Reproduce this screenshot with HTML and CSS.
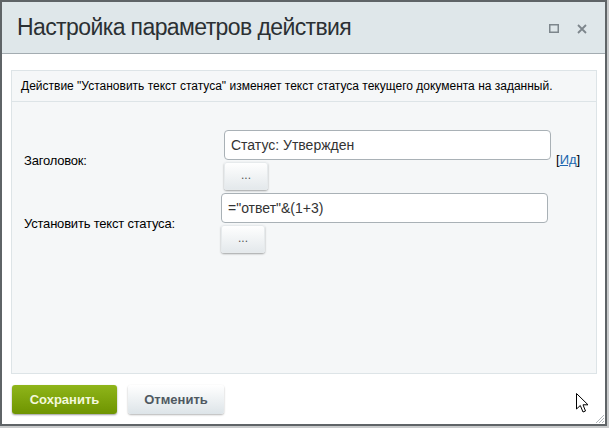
FILE: index.html
```html
<!DOCTYPE html>
<html lang="ru">
<head>
<meta charset="utf-8">
<link rel="stylesheet" href="styles.css">
</head>
<body>
<div class="window">
  <div class="header">
    <div class="title">Настройка параметров действия</div>
    <div class="hicons">
      <svg class="hicon" width="10" height="9" viewBox="0 0 10 9"><rect x="0.75" y="0.75" width="8.5" height="7.5" fill="none" stroke="#7d868c" stroke-width="1.5"/></svg>
      <svg class="hicon" width="10" height="10" viewBox="0 0 10 10"><path d="M1 1 L9 9 M9 1 L1 9" stroke="#7d868c" stroke-width="1.8"/></svg>
    </div>
  </div>
  <div class="content">
    <div class="panel">
      <div class="desc">Действие "Установить текст статуса" изменяет текст статуса текущего документа на заданный.</div>
      <div class="form">
        <div class="row">
          <div class="label">Заголовок:</div>
          <div class="ctrl ctrl1">
            <div class="input">Статус: Утвержден</div>
            <div class="dots">...</div>
          </div>
          <div class="idlink">[<a href="#">Ид</a>]</div>
        </div>
        <div class="row">
          <div class="label">Установить текст статуса:</div>
          <div class="ctrl ctrl2">
            <div class="input">="ответ"&amp;(1+3)</div>
            <div class="dots">...</div>
          </div>
        </div>
      </div>
    </div>
    <div class="footer">
      <div class="btn save">Сохранить</div>
      <div class="btn cancel">Отменить</div>
    </div>
  </div>
  <svg class="cursor" width="13" height="20" viewBox="0 0 13 20"><path d="M0.5 0.5 L0.5 16 L4.3 12.5 L7 19 L9.5 18 L7 11.8 L12 11.8 Z" fill="#fff" stroke="#000" stroke-width="1"/></svg>
  <svg class="grip" width="10" height="10" viewBox="0 0 10 10"><path d="M9 1 L1 9 M9 4 L4 9 M9 7 L7 9" stroke="#b0b6ba" stroke-width="1"/></svg>
</div>
</body>
</html>
```
FILE: styles.css
```css
html, body {
  margin: 0;
  padding: 0;
}
body {
  background: #c9cbcc;
  font-family: "Liberation Sans", Arial, sans-serif;
  width: 609px;
  height: 428px;
  overflow: hidden;
}
.window {
  position: relative;
  box-sizing: border-box;
  width: 607px;
  height: 426px;
  border: 2px solid #5f6467;
  background: #fff;
  display: flex;
  flex-direction: column;
}
.header {
  height: 51px;
  border-bottom: 1px solid #a3acb1;
  background: #dfe7ea;
  display: flex;
  align-items: center;
  padding: 0 18px 0 15px;
}
.title {
  flex: 1;
  font-size: 23px;
  letter-spacing: -0.6px;
  color: #2b3033;
  white-space: nowrap;
}
.hicons {
  display: flex;
  align-items: center;
  gap: 18px;
  padding-top: 2px;
}
.hicon { display: block; }
.content {
  flex: 1;
  display: flex;
  flex-direction: column;
  padding: 16px 8px 0 9px;
}
.panel {
  height: 302px;
  border: 1px solid #dde4e7;
  background: #f5f7f8;
}
.desc {
  height: 30px;
  border-bottom: 1px solid #dde4e7;
  padding-left: 9px;
  font-size: 12px;
  line-height: 30px;
  color: #000;
  white-space: nowrap;
}
.form {
  padding: 28px 0 0 12px;
  display: flex;
  flex-direction: column;
  gap: 3px;
}
.row {
  display: flex;
  align-items: center;
}
.label {
  width: 200px;
  font-size: 13px;
  letter-spacing: -0.2px;
  color: #000;
}
.ctrl {
  display: flex;
  flex-direction: column;
  align-items: flex-start;
  gap: 2px;
}
.ctrl1 { margin-left: 0; }
.ctrl2 { margin-left: -3px; }
.input {
  box-sizing: border-box;
  width: 327px;
  height: 30px;
  border: 1px solid #a9b1b6;
  border-radius: 4px;
  background: #fff;
  font-size: 14px;
  line-height: 28px;
  padding-left: 6px;
  color: #333;
}
.dots {
  width: 44px;
  height: 28px;
  border-radius: 3px;
  background: linear-gradient(#ffffff, #e3e8eb);
  box-shadow: 0 1px 2px rgba(0,0,0,0.35), inset 0 0 0 1px #e6eaec;
  text-align: center;
  font-size: 12px;
  line-height: 26px;
  color: #555;
}
.idlink {
  align-self: center;
  margin-left: 5px;
  margin-top: -2px;
  font-size: 13px;
  color: #000;
}
.idlink a {
  color: #2067b0;
}
.footer {
  display: flex;
  gap: 11px;
  padding: 11px 0 0 1px;
}
.btn {
  height: 29px;
  border-radius: 3px;
  font-size: 13px;
  font-weight: bold;
  line-height: 29px;
  text-align: center;
}
.save {
  width: 105px;
  background: linear-gradient(#8fb51a, #6e9400);
  color: #f3f8dc;
  box-shadow: 0 1px 2px rgba(0,0,0,0.4);
}
.cancel {
  width: 96px;
  background: linear-gradient(#ffffff, #dde4e8);
  color: #4f5961;
  box-shadow: 0 1px 2px rgba(0,0,0,0.3);
}
.cursor {
  position: absolute;
  left: 574px;
  top: 391px;
}
.grip {
  position: absolute;
  right: 0;
  bottom: 0;
}
```
